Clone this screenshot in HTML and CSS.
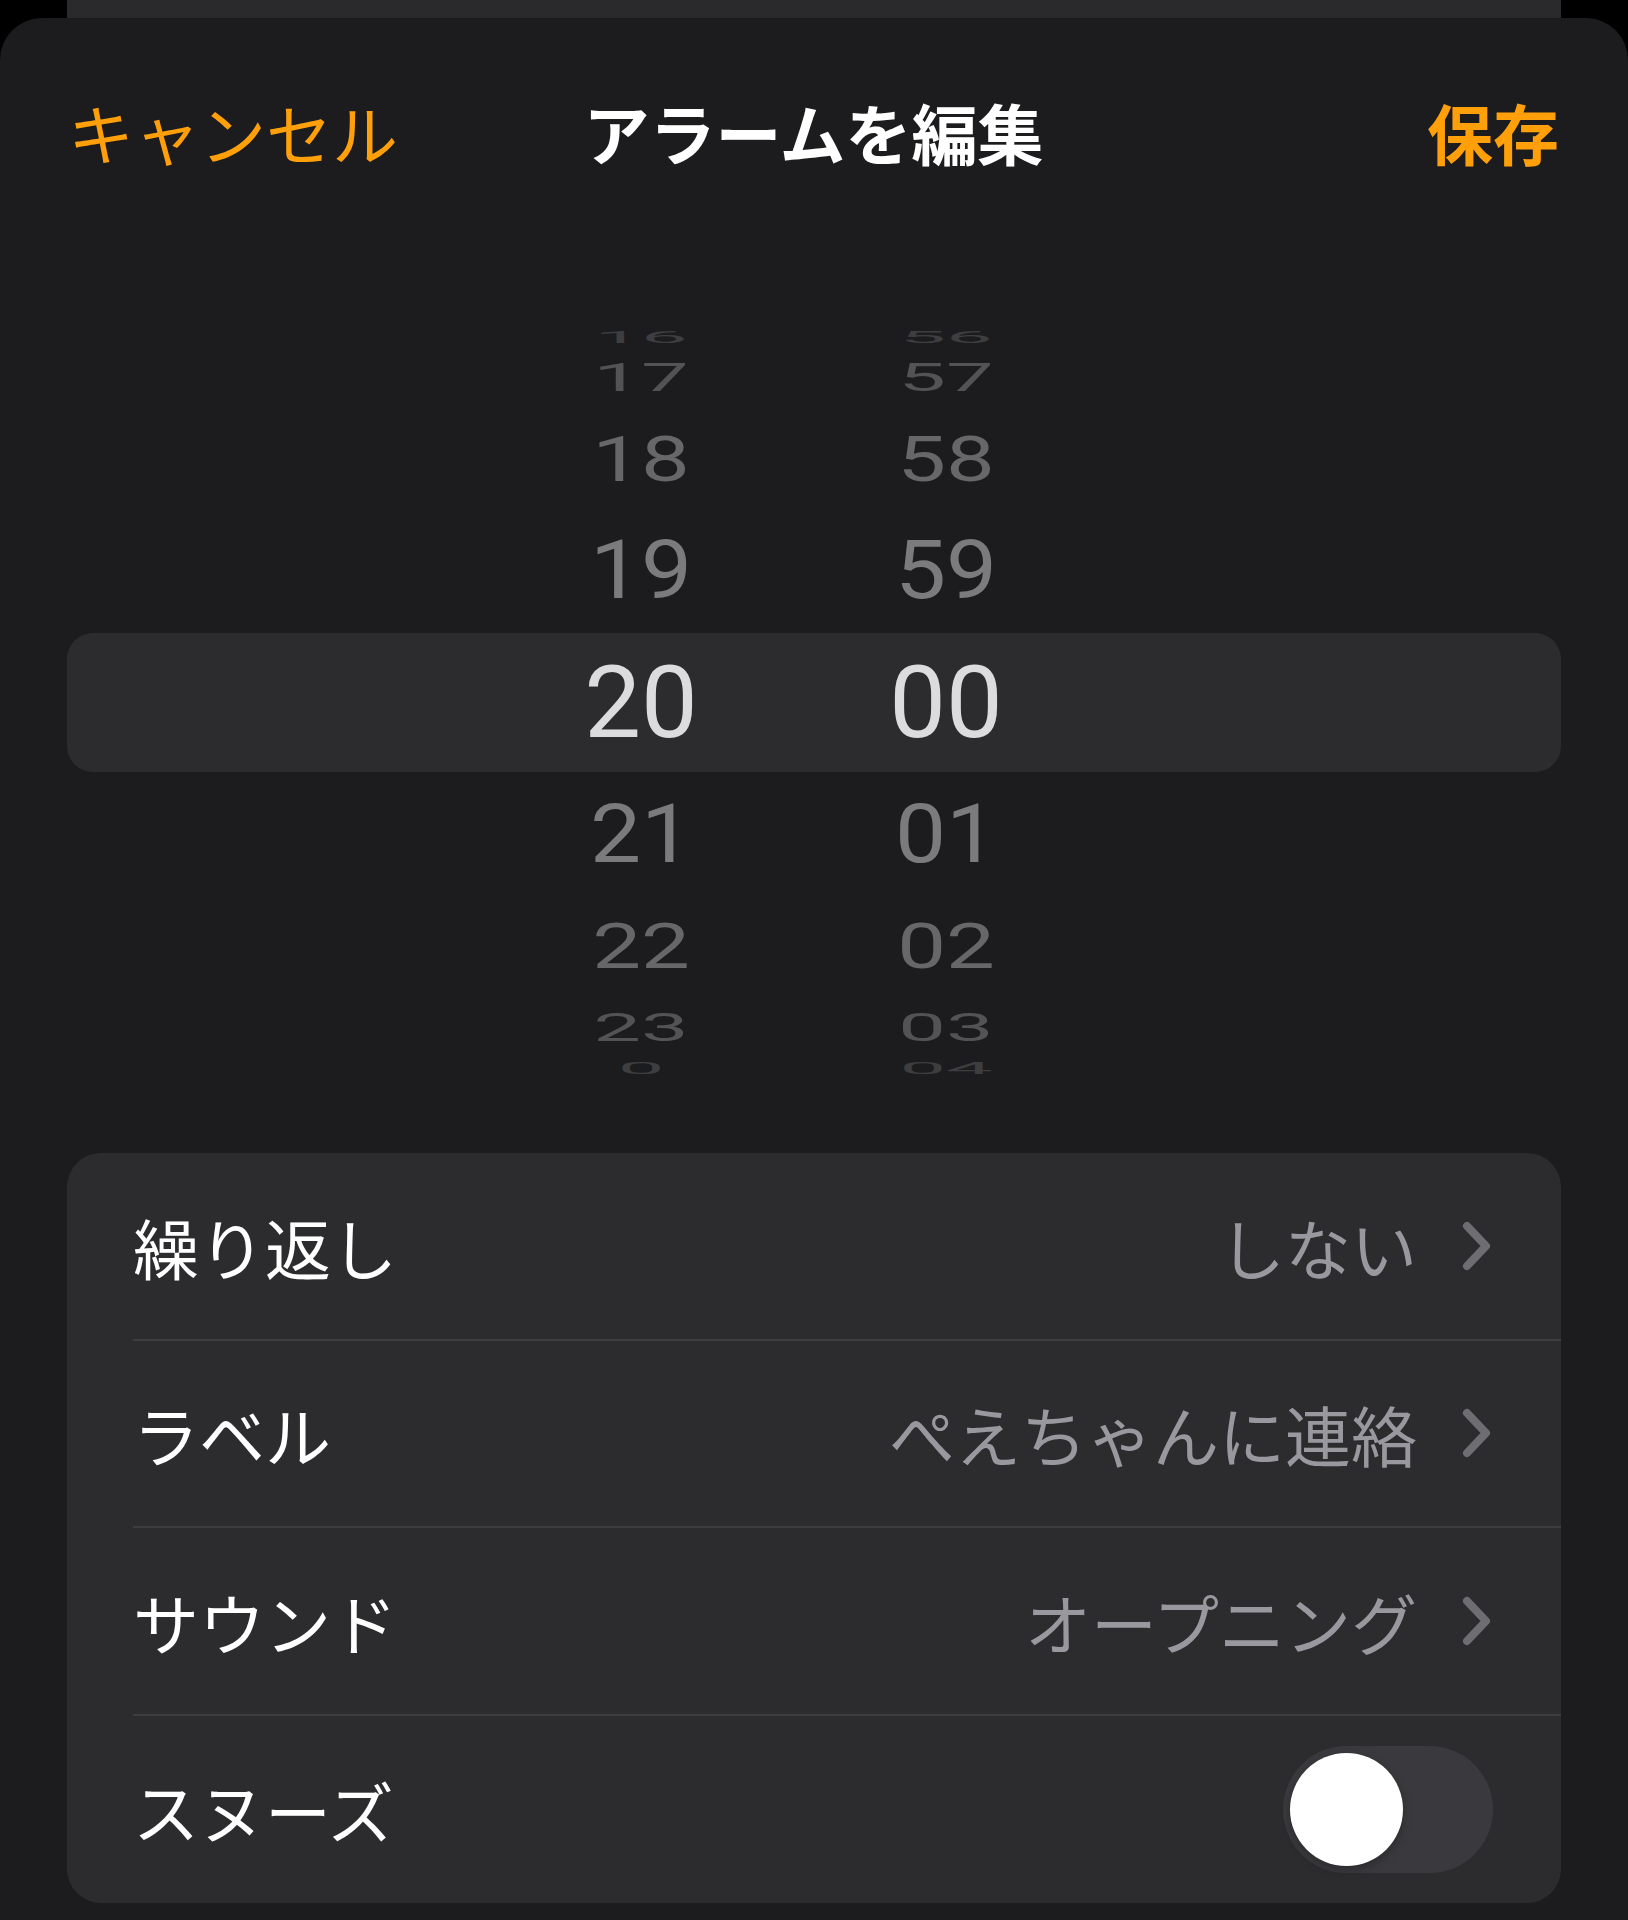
FILE: index.html
```html
<!DOCTYPE html>
<html lang="ja">
<head>
<meta charset="utf-8">
<title>アラームを編集</title>
<link rel="stylesheet" href="styles.css">
</head>
<body>
<div class="backsheet"></div>
<div class="sheet">
  <header class="header">
    <span class="btn cancel">キャンセル</span>
    <span class="title">アラームを編集</span>
    <span class="btn save">保存</span>
  </header>

  <div class="picker">
    <div class="prow p4"><span class="cell">16</span><span class="cell">56</span></div>
    <div class="prow p3"><span class="cell">17</span><span class="cell">57</span></div>
    <div class="prow p2"><span class="cell">18</span><span class="cell">58</span></div>
    <div class="prow p1"><span class="cell">19</span><span class="cell">59</span></div>
    <div class="prow p0"><span class="cell">20</span><span class="cell">00</span></div>
    <div class="prow p1"><span class="cell">21</span><span class="cell">01</span></div>
    <div class="prow p2"><span class="cell">22</span><span class="cell">02</span></div>
    <div class="prow p3"><span class="cell">23</span><span class="cell">03</span></div>
    <div class="prow p4"><span class="cell">0</span><span class="cell">04</span></div>
  </div>

  <div class="card">
    <div class="row">
      <div class="row-body">
        <span class="label">繰り返し</span>
        <span class="value">しない</span>
        <svg class="chev" viewBox="0 0 29 50" width="29" height="50"><path d="M5 5 L24 25 L5 45"/></svg>
      </div>
    </div>
    <div class="row">
      <div class="row-body">
        <span class="label">ラベル</span>
        <span class="value">ぺえちゃんに連絡</span>
        <svg class="chev" viewBox="0 0 29 50" width="29" height="50"><path d="M5 5 L24 25 L5 45"/></svg>
      </div>
    </div>
    <div class="row">
      <div class="row-body">
        <span class="label">サウンド</span>
        <span class="value">オープニング</span>
        <svg class="chev" viewBox="0 0 29 50" width="29" height="50"><path d="M5 5 L24 25 L5 45"/></svg>
      </div>
    </div>
    <div class="row last">
      <div class="row-body">
        <span class="label">スヌーズ</span>
        <span class="toggle"><span class="knob"></span></span>
      </div>
    </div>
  </div>
</div>
</body>
</html>
```

FILE: styles.css
```css
* { box-sizing: border-box; }

html, body {
  margin: 0;
  padding: 0;
  background: #000;
}

body {
  width: 1628px;
  height: 1920px;
  overflow: hidden;
  font-family: "Noto Sans CJK JP", "Noto Sans", sans-serif;
  color: #fff;
}

.backsheet {
  height: 18px;
  margin: 0 67px;
  background: #2a2a2c;
}

.sheet {
  height: 1902px;
  background: #1c1c1e;
  border-radius: 42px 42px 0 0;
  overflow: hidden;
}

/* header */
.header {
  height: 234px;
  display: grid;
  grid-template-columns: 1fr auto 1fr;
  align-items: center;
  padding: 0 69px 8px 68px;
  font-size: 66px;
  line-height: 1;
}

.btn { color: #ff9f0a; }
.cancel { justify-self: start; font-weight: 400; }
.save { justify-self: end; font-weight: 700; }
.title { font-weight: 700; color: #fff; }

/* picker */
.picker {
  margin-top: 77px;
  height: 747px;
  overflow: hidden;
  display: flex;
  flex-direction: column;
  font-family: Roboto, "Liberation Sans", sans-serif;
  font-size: 101px;
  line-height: 1;
}

.prow {
  margin: 0 67px;
  padding-left: 474px;
  display: flex;
  align-items: center;
  gap: 105px;
  flex: none;
}

.cell {
  width: 200px;
  text-align: center;
  display: block;
}

.p0 {
  height: 139px;
  background: #2c2c2e;
  border-radius: 26px;
}
.p0 .cell { color: #dcdcde; }

.p1 { height: 125px; }
.p1 .cell { color: #7b7b7d; transform: scale(0.9, 0.81); }

.p2 { height: 98px; }
.p2 .cell { color: #676769; transform: scale(0.86, 0.62); }

.p3 { height: 65px; }
.p3 .cell { color: #535355; transform: scale(0.84, 0.38); }

.p4 { height: 16px; }
.p4 .cell { color: #3e3e40; transform: scale(0.82, 0.17); }

/* settings card */
.card {
  margin: 77px 67px 0;
  background: #2c2c2e;
  border-radius: 34px;
  padding-left: 66px;
  overflow: hidden;
}

.row {
  height: 187.5px;
}

.row-body {
  height: 100%;
  display: flex;
  align-items: center;
  padding-right: 70px;
  border-bottom: 2px solid #3d3d40;
  font-size: 66px;
  line-height: 1;
}

.row.last .row-body { border-bottom: none; }

.label {
  color: #fff;
  margin-right: auto;
}

.value {
  color: #98989e;
  margin-right: 45px;
}

.chev {
  display: block;
  flex: none;
}
.chev path {
  fill: none;
  stroke: #6d6d72;
  stroke-width: 8;
  stroke-linecap: round;
  stroke-linejoin: round;
}

.toggle {
  width: 210px;
  height: 127px;
  border-radius: 64px;
  background: #3a3a3e;
  display: flex;
  align-items: center;
  padding-left: 7px;
  margin-right: -2px;
}

.knob {
  width: 113px;
  height: 113px;
  border-radius: 50%;
  background: #fff;
  box-shadow: 0 4px 10px rgba(0, 0, 0, 0.25), 0 0 1px rgba(0, 0, 0, 0.2);
}
```
